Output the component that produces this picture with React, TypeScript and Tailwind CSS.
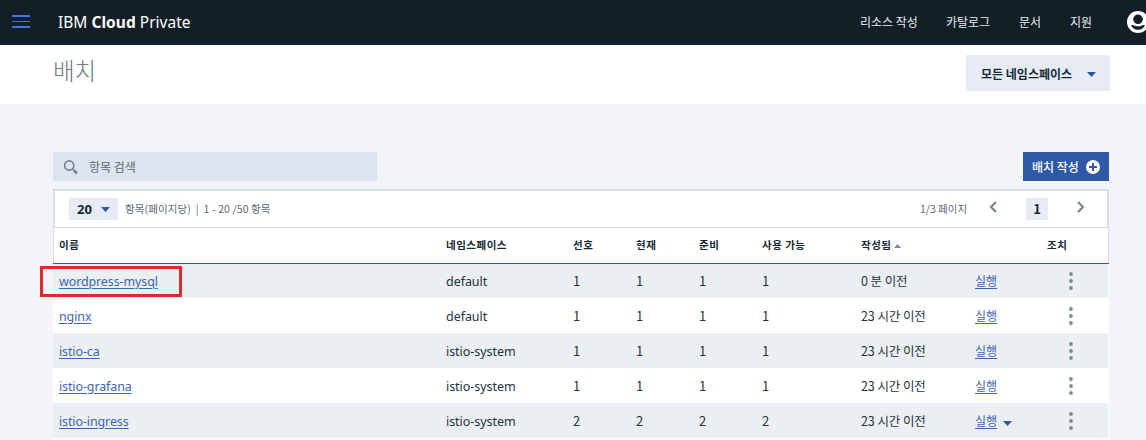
import React from "react";

type Row = { name: string; ns: string; count: number; age: string; menu?: boolean };

const rows: Row[] = [
  { name: "wordpress-mysql", ns: "default", count: 1, age: "0 분 이전" },
  { name: "nginx", ns: "default", count: 1, age: "23 시간 이전" },
  { name: "istio-ca", ns: "istio-system", count: 1, age: "23 시간 이전" },
  { name: "istio-grafana", ns: "istio-system", count: 1, age: "23 시간 이전" },
  { name: "istio-ingress", ns: "istio-system", count: 2, age: "23 시간 이전", menu: true },
];

const columns = "grid grid-cols-[387px_127px_63px_63px_63px_99px_114px_1fr] items-center";
const kr = "font-['Noto_Sans_CJK_KR',sans-serif]";
const latin = "font-['Noto_Sans','Noto_Sans_CJK_KR',sans-serif]";

function Caret({ className = "" }: { className?: string }) {
  return (
    <svg className={`shrink-0 ${className}`} width="9" height="5" viewBox="0 0 9 5">
      <path d="M0 0h9L4.5 5z" fill="#2c57a8" />
    </svg>
  );
}

function Header() {
  return (
    <header className="flex h-[45px] items-center bg-[#121f27] pl-3 text-white">
      <svg width="18" height="14" viewBox="0 0 18 14" className="-mt-0.5 shrink-0">
        <path d="M0 1h18M0 12h18" stroke="#4178d8" strokeWidth="2" />
        <path d="M0 6.5h18" stroke="#4178d8" strokeWidth="1" />
      </svg>
      <div className={`ml-[28px] w-[140px] whitespace-nowrap text-[15.5px] leading-5 tracking-[0.02px] -mt-0.5 ${latin}`}>
        IBM <span className="font-bold">Cloud</span> Private
      </div>
      <nav className={`-mt-0.5 ml-auto flex shrink-0 text-[12px] leading-5 text-[#e6ebee] ${kr}`}>
        <span className="w-[86px]">리소스 작성</span>
        <span className="w-[73px]">카탈로그</span>
        <span className="w-[51px]">문서</span>
        <span className="w-[57px]">지원</span>
      </nav>
      <div className="-mt-px w-[19px] shrink-0 overflow-hidden">
        <svg width="22" height="22" viewBox="0 0 22 22" className="max-w-none">
          <circle cx="11" cy="11" r="11" fill="#fff" />
          <circle cx="11" cy="8.300" r="4.800" fill="#121f27" />
          <path d="M4.200 14c1.200-.3 2.400.2 3.600.7 2 .7 4.400.7 6.400 0 1.200-.5 2.400-1 3.600-.7-.5 2.900-3.500 4.800-6.800 4.800S4.700 16.900 4.200 14z" fill="#121f27" />
        </svg>
      </div>
    </header>
  );
}

function Toolbar() {
  return (
    <div className="flex h-[39px] items-center border-2 border-b border-[#d8dde0] bg-white pl-[14px] text-[11px] text-[#5a6872]">
      <div className={`flex h-[22px] w-[49px] items-center bg-[#e6ebf5] pl-2 ${latin}`}>
        <span className="w-[24px] pt-px text-[13px] font-bold text-[#152935]">20</span>
        <Caret />
      </div>
      <span className={`ml-[7px] whitespace-pre text-[10.500px] tracking-[0.100px] ${kr}`}>항목(페이지당)  |  1 - 20 /50 항목</span>
      <span className={`ml-auto w-[69px] whitespace-nowrap text-[10.500px] ${kr}`}>1/3 페이지</span>
      <svg width="8" height="12" viewBox="0 0 8 12" className="-mt-1">
        <path d="M7 1L2 6l5 5" fill="none" stroke="#6f7f89" strokeWidth="2" />
      </svg>
      <div className={`ml-[29px] flex h-[22px] w-[22px] items-center justify-center bg-[#e6ebf5] text-[13px] font-bold text-[#152935] ${kr}`}>
        1
      </div>
      <svg width="8" height="12" viewBox="0 0 8 12" className="-mt-1 ml-[29px] mr-[22px]">
        <path d="M1 1l5 5-5 5" fill="none" stroke="#6f7f89" strokeWidth="2" />
      </svg>
    </div>
  );
}

function TableHead() {
  return (
    <div className={`h-[36px] border-b border-b-[#2f5aa8] ${kr}`}>
      <div className={`${columns} h-[35px] border-x border-x-[#d8dde0] pb-0.5 pl-[5px] text-[10.500px] font-bold tracking-[0.500px] text-[#152935]`}>
        <span>이름</span>
        <span>네임스페이스</span>
        <span>선호</span>
        <span>현재</span>
        <span>준비</span>
        <span>사용 가능</span>
        <span className="flex items-center">
          작성됨
          <svg width="7" height="4" viewBox="0 0 7 4" className="ml-[3px] mt-0.5">
            <path d="M0 4h7L3.500 0z" fill="#7b8b95" />
          </svg>
        </span>
        <span className="pl-[72px]">조치</span>
      </div>
    </div>
  );
}

function TableRow({ row, index }: { row: Row; index: number }) {
  const link = "text-[#3d65b0] underline decoration-[#3d65b0] decoration-1 underline-offset-2";
  const textTop = index === 0 ? "pt-0.5" : "pt-[3px]";
  return (
    <div className={`${index === 0 ? "h-[34px]" : "h-[35px]"} ${index % 2 === 0 ? "bg-[#ebeff2]" : "bg-white"} ${columns} mr-px pl-[6px] text-[13px] text-[#1f323d] ${kr}`}>
      <a className={`${link} ${textTop} justify-self-start text-[12.500px] tracking-[-0.120px] ${latin}`}>{row.name}</a>
      <span className={`${textTop} text-[12.500px] tracking-[-0.050px] ${latin}`}>{row.ns}</span>
      <span>{row.count}</span>
      <span>{row.count}</span>
      <span>{row.count}</span>
      <span>{row.count}</span>
      <span className="pt-px text-[12.500px] tracking-[-0.100px]">{row.age}</span>
      <span className="grid grid-cols-[28px_66px_1fr] items-center text-[12px]">
        <a className={`${link} justify-self-start`}>실행</a>
        {row.menu ? <Caret className="mt-[6px]" /> : <span />}
        <svg width="4" height="18" viewBox="0 0 4 18" fill="#7b8b95">
          <circle cx="2" cy="2" r="1.900" />
          <circle cx="2" cy="9" r="1.900" />
          <circle cx="2" cy="16" r="1.900" />
        </svg>
      </span>
    </div>
  );
}

export default function App() {
  return (
    <div className="h-[440px] w-[1146px] overflow-hidden bg-[#f3f4f9]">
      <Header />
      <div className={`flex h-[59px] justify-between bg-white pl-[53px] pr-[36px] ${kr}`}>
        <h1 className="pt-[10px] text-[23.500px] font-light leading-[30px] text-[#6b7a84]">배치</h1>
        <div className="mt-[10px] flex h-[36px] w-[144px] items-center bg-[#e6ebf5] pl-[15px] text-[12px] font-bold text-[#152935]">
          <span className="w-[106px] pt-0.5">모든 네임스페이스</span>
          <Caret className="mt-0.5" />
        </div>
      </div>
      <main className="relative ml-[53px] w-[1056px] pt-12">
        <div className="flex h-[29px] justify-between">
          <div className={`flex w-[324px] items-center bg-[#dce4ef] pl-[10px] text-[12px] text-[#5a6872] ${kr}`}>
            <svg width="16" height="16" viewBox="0 0 16 16" className="mr-[10px]">
              <circle cx="6.200" cy="6.500" r="4.600" fill="none" stroke="#73848e" strokeWidth="1.700" />
              <path d="M9.300 9.700l2 2" stroke="#73848e" strokeWidth="1.500" />
              <path d="M11 11.400l3 3" stroke="#73848e" strokeWidth="2.800" />
            </svg>
            항목 검색
          </div>
          <button className={`flex w-[86px] items-center bg-[#2f59a6] pl-[9px] text-[12px] font-medium text-white ${kr}`}>
            <span className="w-[54px] text-left">배치 작성</span>
            <svg width="14" height="14" viewBox="0 0 14 14">
              <circle cx="7" cy="7" r="7" fill="#fff" />
              <path d="M7 3v8M3 7h8" stroke="#2f59a6" strokeWidth="2" />
            </svg>
          </button>
        </div>
        <section className="mt-2 bg-white">
          <Toolbar />
          <TableHead />
          {rows.map((row, i) => (
            <TableRow key={row.name} row={row} index={i} />
          ))}
          <div className="h-9" />
        </section>
        <div className="absolute left-[-13px] top-[162px] h-[31px] w-[142px] border-[3px] border-[#e22828]" />
      </main>
    </div>
  );
}
